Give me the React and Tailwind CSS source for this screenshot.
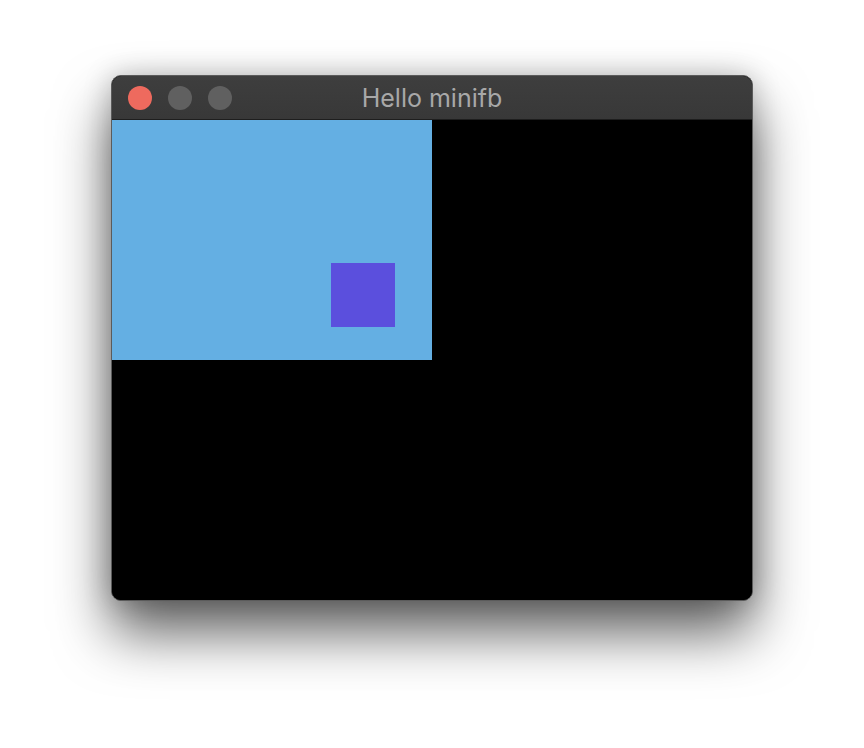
export default function App() {
    return (
        <div className="min-h-screen bg-white pt-[75px] pl-[111px]">
            {/* window frame */}
            <div className="w-[642px] rounded-[10px] border border-[#5b5b5b] bg-black overflow-hidden shadow-[0_32px_55px_rgba(0,0,0,0.62),0_0_28px_rgba(0,0,0,0.22)]">
                {/* title bar */}
                <div className="h-[44px] grid grid-cols-[1fr_auto_1fr] items-center bg-gradient-to-b from-[#3e3e3e] to-[#383838] border-b border-[#1e1e1e]">
                    <div className="flex items-center gap-[16px] pl-[16px]">
                        <span className="w-[24px] h-[24px] rounded-full bg-[#ee6a5e]" />
                        <span className="w-[24px] h-[24px] rounded-full bg-[#606060]" />
                        <span className="w-[24px] h-[24px] rounded-full bg-[#606060]" />
                    </div>
                    <div className="pt-[2px] text-[25px] leading-none text-[#a8a8a8] font-['Inter','Liberation_Sans',sans-serif]">
                        Hello minifb
                    </div>
                    <div />
                </div>

                {/* framebuffer 640x480 */}
                <div className="h-[480px] bg-black">
                    <div className="w-[320px] h-[240px] bg-[#64afe3] pl-[219px] pt-[143px]">
                        <div className="w-[64px] h-[64px] bg-[#5b4fdd]" />
                    </div>
                </div>
            </div>
        </div>
    );
}
